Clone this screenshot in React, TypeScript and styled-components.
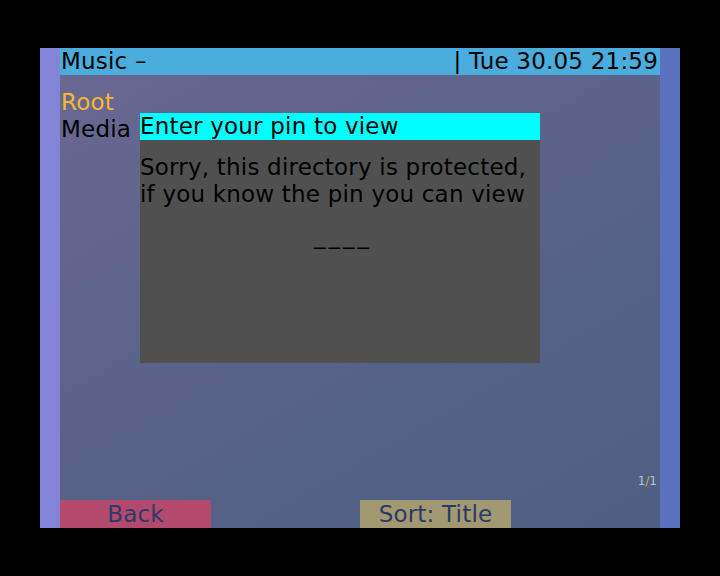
import styled, { createGlobalStyle } from 'styled-components';

const GlobalStyle = createGlobalStyle`
  html, body {
    margin: 0;
    padding: 0;
    background: #000;
  }
  body {
    font-family: "DejaVu Sans", "Liberation Sans", sans-serif;
  }
`;

const Stage = styled.div`
  width: 720px;
  height: 576px;
  display: flex;
  align-items: center;
  justify-content: center;
  background: #000;
`;

const Screen = styled.div`
  width: 640px;
  height: 480px;
  display: flex;
`;

const SideStrip = styled.div<{ $tone: string }>`
  width: 20px;
  background: ${(p) => p.$tone};
`;

const Main = styled.div`
  position: relative;
  width: 600px;
  display: flex;
  flex-direction: column;
  background: linear-gradient(150deg, #6a6893 0%, #5a6289 50%, #4d5f84 100%);
  font-size: 23px;
  line-height: 27px;
  letter-spacing: 0.2px;
  color: #000;
`;

const TopBar = styled.div`
  height: 27px;
  display: flex;
  justify-content: space-between;
  align-items: center;
  padding: 0 2px 0 1px;
  background: #4aaddd;
  white-space: pre;
`;

const Content = styled.div`
  flex: 1;
  padding: 14px 0 0 1px;
  display: flex;
  flex-direction: column;
`;

const Entry = styled.div<{ $active?: boolean }>`
  height: 27px;
  color: ${(p) => (p.$active ? '#f7b731' : '#000')};
`;

const PageCount = styled.div`
  align-self: flex-end;
  margin-right: 3px;
  margin-bottom: 12px;
  font-size: 12px;
  line-height: 14px;
  letter-spacing: 0;
  color: #b9c0d8;
`;

const Slash = styled.span`
  color: #e6a52c;
`;

const ButtonRow = styled.div`
  display: grid;
  grid-template-columns: repeat(4, 150px);
  height: 28px;
`;

const SoftButton = styled.div<{ $tone: string; $col: number }>`
  grid-column: ${(p) => p.$col};
  width: 151px;
  background: ${(p) => p.$tone};
  color: #2c3a69;
  text-align: center;
  line-height: 28px;
`;

const Dialog = styled.div`
  position: absolute;
  left: 80px;
  top: 65px;
  width: 400px;
  height: 250px;
  background: #505050;
  display: flex;
  flex-direction: column;
`;

const DialogTitle = styled.div`
  height: 27px;
  background: #00ffff;
  line-height: 26px;
`;

const DialogText = styled.div`
  padding-top: 14px;
`;

const PinMask = styled.div`
  margin-top: 15px;
  text-align: center;
  letter-spacing: 3px;
  padding-left: 6px;
`;

export default function App() {
  return (
    <>
      <GlobalStyle />
      <Stage>
        <Screen>
          <SideStrip $tone="#8484d4" />
          <Main>
            <TopBar>
              <span>Music –</span>
              <span>| Tue 30.05 21:59</span>
            </TopBar>
            <Content>
              <Entry $active>Root</Entry>
              <Entry>Media</Entry>
              <div style={{ flex: 1 }} />
              <PageCount>
                1<Slash>/</Slash>1
              </PageCount>
            </Content>
            <ButtonRow>
              <SoftButton $tone="#b24a6d" $col={1}>Back</SoftButton>
              <SoftButton $tone="#a29872" $col={3}>Sort: Title</SoftButton>
            </ButtonRow>
            <Dialog>
              <DialogTitle>Enter your pin to view</DialogTitle>
              <DialogText>
                Sorry, this directory is protected,
                <br />
                if you know the pin you can view
              </DialogText>
              <PinMask>____</PinMask>
            </Dialog>
          </Main>
          <SideStrip $tone="#5a71be" />
        </Screen>
      </Stage>
    </>
  );
}
